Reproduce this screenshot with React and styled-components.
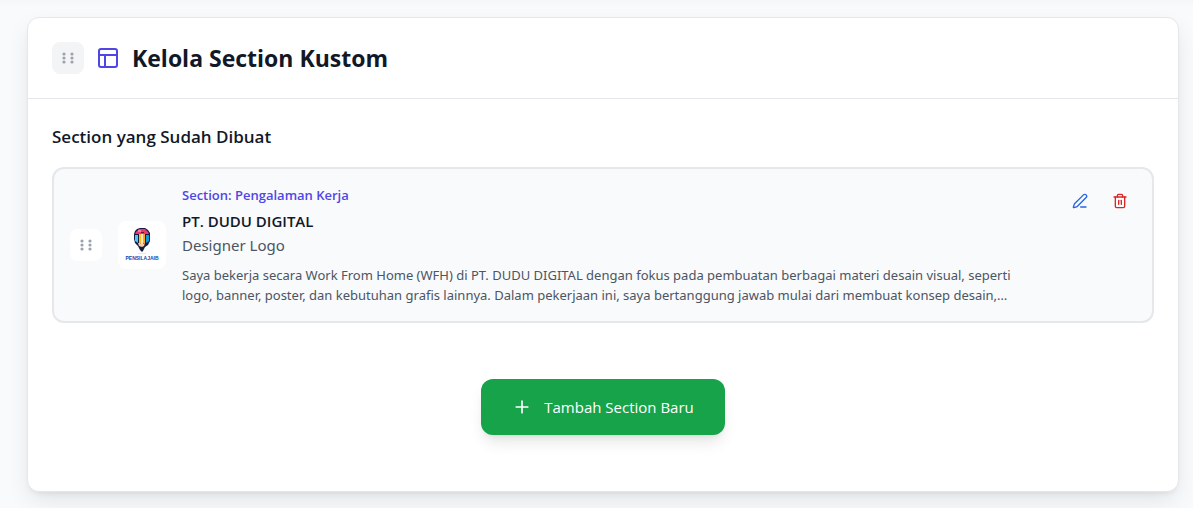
import React from 'react';
import styled, { createGlobalStyle } from 'styled-components';
import { PanelsTopLeft, PenLine, Trash2, Plus } from 'lucide-react';

const Global = createGlobalStyle`
  *, *::before, *::after { box-sizing: border-box; }
  body {
    margin: 0;
    background: #f9fafb;
    color: #111827;
    font-family: "Segoe UI", "Open Sans", "Noto Sans", sans-serif;
    font-size: 15px;
    line-height: 24px;
  }
  h2, h3, h4, p { margin: 0; }
  button { font: inherit; border: 0; padding: 0; cursor: pointer; }
`;

const Page = styled.main`
  padding: 17px 14px 16px 27px;
  background: linear-gradient(#f5f6f8, #f9fafb 6px);
`;

const Card = styled.section`
  background: #fff;
  border: 1px solid #e5e7eb;
  border-radius: 12px;
  box-shadow: 0 10px 25px -3px rgba(0, 0, 0, 0.1), 0 4px 6px -4px rgba(0, 0, 0, 0.1);
`;

const CardHeader = styled.header`
  display: flex;
  align-items: center;
  gap: 12px;
  padding: 24px;
  border-bottom: 1px solid #e5e7eb;
`;

const CardTitle = styled.h2`
  font-size: 23px;
  line-height: 32px;
  font-weight: 700;
`;

const CardBody = styled.div`
  padding: 24px;
`;

const ListTitle = styled.h3`
  margin-bottom: 16px;
  font-size: 17px;
  line-height: 28px;
  font-weight: 600;
`;

const HandleButton = styled.button`
  display: grid;
  place-items: center;
  flex: none;
  width: 32px;
  height: 32px;
  border-radius: 8px;
  background: ${(p) => p.$fill};
  color: #9ca3af;
`;

const Item = styled.article`
  display: flex;
  align-items: center;
  gap: 16px;
  padding: 16px;
  background: #f9fafb;
  border: 2px solid #e5e7eb;
  border-radius: 12px;
`;

const Logo = styled.div`
  display: grid;
  place-items: center;
  flex: none;
  width: 48px;
  height: 48px;
  border-radius: 8px;
  background: #fff;
`;

const LogoName = styled.text`
  font-family: "Liberation Sans", sans-serif;
  font-size: 5px;
  font-weight: 700;
  fill: #1746b3;
`;

const Details = styled.div`
  flex: 1;
  min-width: 0;
`;

const SectionLabel = styled.p`
  margin-bottom: 4px;
  font-size: 13px;
  line-height: 20px;
  font-weight: 600;
  color: #4f46e5;
`;

const ItemTitle = styled.h4`
  font-size: 15px;
  font-weight: 600;
`;

const Role = styled.p`
  font-family: "Segoe UI", "Noto Sans", sans-serif;
  color: #4b5563;
`;

const Description = styled.p`
  margin-top: 8px;
  padding-right: 16px;
  font-family: "Segoe UI", "Noto Sans", sans-serif;
  font-size: 13px;
  line-height: 20px;
  color: #4b5563;
`;

const Actions = styled.div`
  display: flex;
  align-self: flex-start;
  gap: 8px;
`;

const IconButton = styled.button`
  display: grid;
  place-items: center;
  width: 32px;
  height: 32px;
  border-radius: 8px;
  background: transparent;
  color: ${(p) => p.$color};
`;

const Footer = styled.div`
  display: flex;
  justify-content: center;
  padding: 56px 0 32px;
`;

const AddButton = styled.button`
  display: flex;
  align-items: center;
  gap: 12px;
  padding: 16px 31px;
  border-radius: 12px;
  background: #16a34a;
  color: #fff;
  box-shadow: 0 10px 15px -3px rgba(0, 0, 0, 0.1), 0 4px 6px -4px rgba(0, 0, 0, 0.1);
`;

function DragHandle({ fill }) {
  return (
    <HandleButton type="button" aria-label="Geser" $fill={fill}>
      <svg width="16" height="16" viewBox="0 0 16 16" fill="currentColor" aria-hidden="true">
        {[4, 12].map((x) => [4, 8, 12].map((y) => <circle key={`${x}-${y}`} cx={x} cy={y} r="1.6" />))}
      </svg>
    </HandleButton>
  );
}

function PencilLogo() {
  return (
    <svg width="40" height="40" viewBox="0 0 40 40" role="img" aria-label="Logo">
      <path d="M13 6L15 4L18 3H23L26 5L28 8V16L26 20L23 22L21 26L20 27L18 25L16 21L13 18L12 14V9Z" fill="#151b3d" />
      <path d="M14 7L17 4H23L26 7L27 9H13Z" fill="#ed3479" />
      <path d="M16 5h3v2h-3z" fill="#ff76a3" />
      <path d="M19 7h3v1h-3z" fill="#5c1742" />
      <path d="M13 10h3v8l-3-2z" fill="#45c8f5" />
      <path d="M24 10h3v6l-3 2z" fill="#129bdc" />
      <path d="M17 9h2v9h-2z" fill="#ffb72c" />
      <path d="M19 9h2v10h-2z" fill="#ffe5b8" />
      <path d="M21 9h2v9h-2z" fill="#ffa51d" />
      <path d="M16 18h2l2 1 3-1-1 3-2 1-3-1z" fill="#f9cda4" />
      <path d="M16 28h8v1h-8z" fill="#dbeafe" />
      <LogoName x="20" y="35" textAnchor="middle">PENSILAJAIB</LogoName>
    </svg>
  );
}

export default function App() {
  return (
    <>
      <Global />
      <Page>
        <Card>
          <CardHeader>
            <DragHandle fill="#f3f4f6" />
            <PanelsTopLeft size={24} color="#4f46e5" />
            <CardTitle>Kelola Section Kustom</CardTitle>
          </CardHeader>
          <CardBody>
            <ListTitle>Section yang Sudah Dibuat</ListTitle>
            <Item>
              <DragHandle fill="#fff" />
              <Logo><PencilLogo /></Logo>
              <Details>
                <SectionLabel>Section: Pengalaman Kerja</SectionLabel>
                <ItemTitle>PT. DUDU DIGITAL</ItemTitle>
                <Role>Designer Logo</Role>
                <Description>
                  Saya bekerja secara Work From Home (WFH) di PT. DUDU DIGITAL dengan fokus pada pembuatan berbagai materi desain visual, seperti logo, banner, poster, dan kebutuhan grafis lainnya. Dalam pekerjaan ini, saya bertanggung jawab mulai dari membuat konsep desain,…
                </Description>
              </Details>
              <Actions>
                <IconButton type="button" aria-label="Edit" $color="#2563eb"><PenLine size={16} /></IconButton>
                <IconButton type="button" aria-label="Hapus" $color="#dc2626"><Trash2 size={16} /></IconButton>
              </Actions>
            </Item>
            <Footer>
              <AddButton type="button"><Plus size={20} />Tambah Section Baru</AddButton>
            </Footer>
          </CardBody>
        </Card>
      </Page>
    </>
  );
}
